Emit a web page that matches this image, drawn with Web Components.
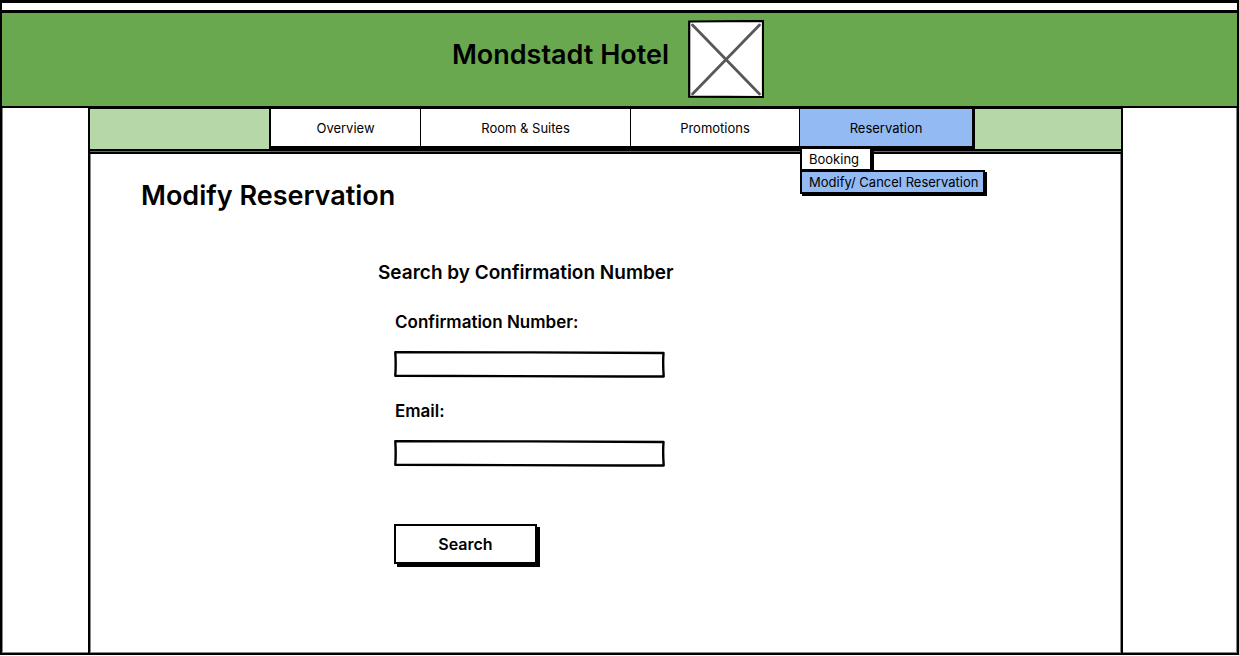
<!DOCTYPE html>
<html lang="en">
<head>
<meta charset="utf-8">
<title>Mondstadt Hotel – Modify Reservation</title>
<style>
  :root { --ink: #000; --soft: #888; --green: #6aa84f; --mint: #b6d7a8; --blue: #93baf2; }
  * { box-sizing: border-box; }
  body { margin: 0; padding-bottom: 1px; min-height: 100vh; display: flex;
    font-family: Inter, "Open Sans", sans-serif; color: var(--ink); background: #fff; }
</style>
</head>
<body>
<hotel-page>
  <hotel-header slot="header">Mondstadt Hotel</hotel-header>
  <hotel-nav slot="nav"></hotel-nav>
  <reservation-search></reservation-search>
</hotel-page>

<script>
const define = (name, html) => customElements.define(name, class extends HTMLElement {
  constructor() {
    super();
    const t = document.createElement('template');
    t.innerHTML = '<style>*{box-sizing:border-box}</style>' + html;
    this.attachShadow({ mode: 'open' }).append(t.content.cloneNode(true));
  }
});

define('hotel-page', `
<style>
  :host { flex: 1; display: flex; flex-direction: column; border: 2px solid var(--ink); border-top-width: 3px;
    box-sizing: border-box; box-shadow: inset 0 0 0 1px var(--soft); }
  .strip { height: 7px; background: #fff; }
  .column { flex: 1; margin: 0 114px 0 86px; border: solid var(--ink); border-width: 0 2px; display: flex; flex-direction: column;
    box-shadow: inset 1px 0 var(--soft), inset -1px 0 var(--soft); }
  main { flex: 1; border-top: 2px solid var(--ink); margin-top: 1px; }
</style>
<div class="strip"></div>
<slot name="header"></slot>
<div class="column">
  <slot name="nav"></slot>
  <main><slot></slot></main>
</div>`);

define('hotel-header', `
<style>
  :host { display: block; }
  header { display: flex; align-items: center; justify-content: center; gap: 19px; height: 98px; padding-right: 23px;
    background: var(--green); border: solid var(--ink); border-width: 3px 0 2px; }
  .name { font-size: 27px; line-height: 32px; font-weight: 600; padding-bottom: 10px; }
  svg { display: block; width: 76px; height: 78px; margin-bottom: 2px; }
</style>
<header>
  <div class="name"><slot></slot></div>
  <svg viewBox="0 0 76 78" role="img" aria-label="Hotel logo">
    <path d="M1.200 1.500 L75 1 L75 77 L1.200 76.700Z" fill="#fff" stroke="#000" stroke-width="2.200"/>
    <path d="M4.500 5 L71.500 74 M71.500 5 L4.500 74" stroke="#585858" stroke-width="2.800" stroke-linecap="round"/>
  </svg>
</header>`);

define('hotel-nav', `
<style>
  :host { display: block; }
  nav { background: var(--mint); border: solid var(--ink); border-width: 1px 0 2px; height: 43px; padding-left: 179px;
    box-shadow: 0 1px #666; }
  ul { list-style: none; margin: 0; padding: 0; }
  .tabs { display: grid; grid-template-columns: 151px 210px 169px 176px; height: 40px; }
  .tabs > li { position: relative; border-left: 1px solid var(--ink); border-bottom: 3px solid var(--ink); background: #fff; }
  .tabs > li:first-child { border-left-width: 2px; }
  .tabs > li.on { background: var(--blue); border-right: 3px solid var(--ink); }
  a { color: inherit; text-decoration: none; font-size: 13px; line-height: 16px; }
  .tabs > li > a { display: flex; align-items: center; justify-content: center; height: 100%; padding-top: 1px; }
  .menu { position: absolute; z-index: 1; left: 0; top: 38px; display: flex; flex-direction: column; align-items: flex-start; }
  .menu li { height: 24px; padding: 2px 11px 0 7px; white-space: nowrap; background: #fff;
    border: 2px solid var(--ink); border-right-width: 4px; }
  .menu a { display: block; }
  .menu li.on { margin-top: -1px; padding-right: 5px; background: var(--blue); border-right-width: 2px; box-shadow: 2px 2px 0 var(--ink); }
</style>
<nav aria-label="Main">
  <ul class="tabs">
    <li><a href="#overview">Overview</a></li>
    <li><a href="#rooms">Room &amp; Suites</a></li>
    <li><a href="#promotions">Promotions</a></li>
    <li class="on"><a href="#reservation">Reservation</a>
      <ul class="menu">
        <li><a href="#booking">Booking</a></li>
        <li class="on"><a href="#modify">Modify/ Cancel Reservation</a></li>
      </ul>
    </li>
  </ul>
</nav>`);

define('sketch-field', `
<style>
  :host { display: block; width: 271px; }
  label { display: block; font-size: 17px; line-height: 20px; font-weight: 600; padding-left: 1px; }
  .box { position: relative; margin-top: 19px; height: 27px; }
  svg { position: absolute; inset: 0; width: 100%; height: 100%; pointer-events: none; }
  input { display: block; width: 100%; height: 100%; border: 0; outline: 0; background: transparent; padding: 0 8px; font: inherit; }
</style>
<label for="f"><slot></slot></label>
<div class="box">
  <input id="f" type="text">
  <svg viewBox="0 0 271 27" preserveAspectRatio="none" aria-hidden="true">
    <path d="M1.300 1.300 C80 1.300 190 1.200 269.500 2 C269 9 269 16 269.700 25.500 C190 25.600 120 25.700 1.300 24.800 C1.800 17 1.800 9 1.300 1.300Z" fill="none" stroke="#000" stroke-width="2.400" stroke-linejoin="round"/>
  </svg>
</div>`);

define('sketch-button', `
<style>
  :host { display: block; }
  button { display: block; width: 143px; height: 40px; border: 2px solid var(--ink); background: #fff; color: inherit;
    box-shadow: 3px 3px 0 var(--ink); font: 600 16px/20px Inter, sans-serif; padding: 0; }
</style>
<button type="submit"><slot></slot></button>`);

define('reservation-search', `
<style>
  :host { display: block; padding: 26px 0 60px 51px; }
  h1 { margin: 0; font-size: 27px; line-height: 32px; font-weight: 600; }
  form { margin: 50px 0 0 237px; }
  h2 { margin: 0; font-size: 19px; line-height: 22px; font-weight: 600; }
  .fields { padding: 28px 0 0 16px; display: grid; gap: 23px; }
  sketch-button { margin-top: 34px; }
</style>
<h1>Modify Reservation</h1>
<form>
  <h2>Search by Confirmation Number</h2>
  <div class="fields">
    <sketch-field>Confirmation Number:</sketch-field>
    <sketch-field>Email:</sketch-field>
    <sketch-button>Search</sketch-button>
  </div>
</form>`);
</script>
</body>
</html>
